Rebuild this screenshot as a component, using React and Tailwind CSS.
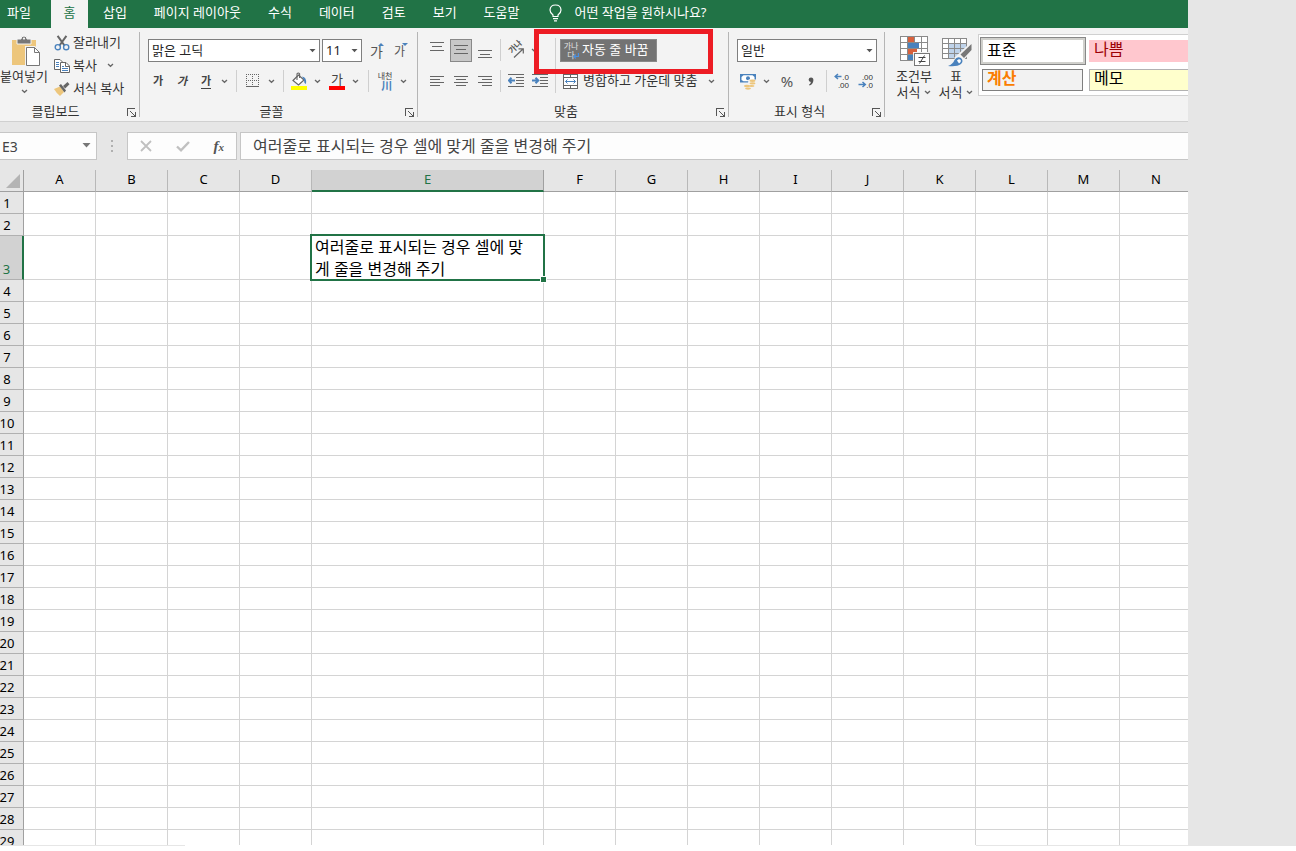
import React from "react";

const COLUMNS = ["A", "B", "C", "D", "E", "F", "G", "H", "I", "J", "K", "L", "M", "N"];
const ROWS = Array.from({ length: 29 }, (_, i) => i + 1);
const CELL_TEXT = "여러줄로 표시되는 경우 셀에 맞게 줄을 변경해 주기";

function Chevron() {
  return (
    <svg width="7" height="5" viewBox="0 0 7 5" fill="none" stroke="#666" strokeWidth="1.3" aria-hidden="true">
      <path d="M1 1 L3.5 3.3 L6 1" />
    </svg>
  );
}

function DropButton({ label }) {
  return (
    <button type="button" aria-label={label} className="flex h-6 w-[14px] shrink-0 items-center pl-[3px]">
      <Chevron />
    </button>
  );
}

function IconButton({ label, children }) {
  return (
    <button type="button" aria-label={label} className="flex h-6 w-6 shrink-0 items-center justify-center">
      {children}
    </button>
  );
}

function Sep({ className = "mx-1" }) {
  return <span className={`h-[22px] w-px shrink-0 bg-[#cfcfcf] ${className}`} />;
}

function Combo({ label, value, className }) {
  return (
    <span className={`relative flex h-[23px] shrink-0 ${className}`}>
      <select
        aria-label={label}
        defaultValue={value}
        className="h-full w-full appearance-none border border-[#7f7f7f] bg-white pb-[2px] pl-[3px] text-[13px] leading-5 text-[#262626]"
      >
        <option>{value}</option>
      </select>
      <svg className="pointer-events-none absolute top-[10px] right-1" width="7" height="4" viewBox="0 0 7 4" fill="#555" aria-hidden="true">
        <path d="M0.5 0 H6.5 L3.5 3.2 Z" />
      </svg>
    </span>
  );
}

function Group({ label, className, labelClass = "", children }) {
  return (
    <section aria-label={label} className={`flex shrink-0 flex-col ${className}`}>
      <div className="h-[75px]">{children}</div>
      <div className="flex h-[18px] items-center">
        <span className={`flex-1 text-center ${labelClass}`}>{label}</span>
        <button type="button" aria-label={`${label} 설정`} className="mr-px flex w-[13px] justify-center">
          <svg width="9" height="9" viewBox="0 0 9 9" fill="none" stroke="#555" shapeRendering="crispEdges" aria-hidden="true">
            <path d="M0.5 8 V0.5 H8" />
            <path d="M3 3 L8 8 M8.5 4 V8.5 H4" />
          </svg>
        </button>
      </div>
    </section>
  );
}

function GroupLine() {
  return <span className="mt-1 h-[85px] w-px shrink-0 bg-[#b5b5b5]" />;
}

function Lines({ d }) {
  return (
    <svg width="16" height="16" viewBox="0 0 16 16" fill="none" stroke="#666" shapeRendering="crispEdges" aria-hidden="true">
      <path d={d} />
    </svg>
  );
}

function PasteIcon() {
  return (
    <svg width="30" height="32" viewBox="0 0 30 32" aria-hidden="true">
      <path d="M1 5 H25 V30 H1 Z" fill="#edc67c" />
      <path d="M6 9 V4 H10 Q10 1 13 1 Q16 1 16 4 H20 V9 Z" fill="#777" stroke="#f3f3f3" strokeWidth="1" />
      <circle cx="13" cy="3.6" r="1.1" fill="#f3f3f3" />
      <path d="M14 11 H24 L30 17 V32 H14 Z" fill="#f3f3f3" />
      <path d="M15.5 12.5 H23.5 L28.5 17.5 V30.5 H15.5 Z" fill="#fff" stroke="#777" />
      <path d="M23.5 12.5 V17.5 H28.5" fill="none" stroke="#777" />
    </svg>
  );
}

function CutIcon() {
  return (
    <svg width="16" height="16" viewBox="0 0 16 16" fill="none" aria-hidden="true">
      <path d="M3.6 0.8 L10.5 10.5 M12.4 0.8 L5.5 10.5" stroke="#666" strokeWidth="2" />
      <circle cx="3.8" cy="12.2" r="2.6" stroke="#4a82bd" strokeWidth="1.4" />
      <circle cx="12.2" cy="12.2" r="2.6" stroke="#4a82bd" strokeWidth="1.4" />
    </svg>
  );
}

function CopyIcon() {
  return (
    <svg width="16" height="16" viewBox="0 0 16 16" fill="none" aria-hidden="true">
      <path d="M0.5 1.5 H6 L8.5 4 V11.5 H0.5 Z" fill="#fff" stroke="#666" />
      <path d="M2 4.5 H5 M2 6.5 H5 M2 8.5 H5" stroke="#4a82bd" />
      <path d="M6.5 4.5 H12 L15.5 8 V14.5 H6.5 Z" fill="#fff" stroke="#666" />
      <path d="M11.5 4.5 V8.5 H15.5" stroke="#666" />
      <path d="M8 8.5 H10 M8 10.5 H14 M8 12.5 H14" stroke="#4a82bd" />
    </svg>
  );
}

function PainterIcon() {
  return (
    <svg width="16" height="16" viewBox="0 0 16 16" aria-hidden="true">
      <path d="M0 8 L6 5.5 L10 11 L6 15 Q3 13 0 8 Z" fill="#edc67c" />
      <path d="M5 4.5 L7 3 L12 9.5 L10.5 11.5 Z" fill="#666" />
      <path d="M9 5 L13.5 1 L15.5 3.2 L11.2 7.6 Z" fill="#666" />
    </svg>
  );
}

function GrowIcon({ up }) {
  return (
    <span className="relative flex h-6 w-6 items-center pt-[2px] pl-[2px] text-[#555]">
      <span className={up ? "text-[14px] leading-5" : "text-[12px] leading-5"}>가</span>
      <svg className="absolute top-1 right-2" width="6" height="3" viewBox="0 0 6 3" fill="#4a82bd" aria-hidden="true">
        <path d={up ? "M0 3 L3 0 L6 3 Z" : "M0 0 H6 L3 3 Z"} />
      </svg>
    </span>
  );
}

function BordersIcon() {
  return (
    <svg width="14" height="14" viewBox="0 0 14 14" fill="none" stroke="#666" shapeRendering="crispEdges" aria-hidden="true">
      <path d="M0 0.5 H13 M0 6.5 H13 M0.5 0 V12 M6.5 0 V12 M12.5 0 V12" strokeDasharray="1 1" />
      <path d="M0 12.5 H13" />
    </svg>
  );
}

function FillIcon() {
  return (
    <svg width="16" height="18" viewBox="0 0 16 18" fill="none" aria-hidden="true">
      <path d="M2 8.5 L7.5 3 L13 8 L7.5 13 Z" fill="#fff" stroke="#666" strokeWidth="1.2" />
      <path d="M6 8 V1.8 Q7.3 0.2 8.6 1.8 V6" stroke="#666" strokeWidth="1.1" />
      <path d="M11 4.5 Q16 5 15 12 Q12.8 11 13 8 Z" fill="#4a82bd" />
      <path d="M0 14 H16 V18 H0 Z" fill="#ff0" />
    </svg>
  );
}

function OrientIcon() {
  return (
    <svg className="overflow-visible" width="18" height="18" viewBox="0 0 18 18" fill="none" aria-hidden="true">
      <text x="0" y="0" transform="translate(5 13) rotate(-45)" fontSize="8" fontWeight="bold" fill="#555">가나</text>
      <path d="M7 16.5 L16 8 M11.5 7.8 H16.3 V12.5" stroke="#666" strokeWidth="1.2" />
    </svg>
  );
}

function IndentIcon({ right }) {
  return (
    <svg width="16" height="14" viewBox="0 0 16 14" fill="none" aria-hidden="true">
      <path d="M0 0.5 H16 M8 3.5 H16 M8 6.5 H16 M8 9.5 H16 M0 12.5 H16" stroke="#666" shapeRendering="crispEdges" />
      <path d={right ? "M0 6.5 H5 M3.5 3.8 L6.3 6.5 L3.5 9.2" : "M7 6.5 H2 M3.5 3.8 L0.8 6.5 L3.5 9.2"} stroke="#4a82bd" strokeWidth="2" />
    </svg>
  );
}

function MergeIcon() {
  return (
    <svg width="15" height="15" viewBox="0 0 15 15" fill="none" aria-hidden="true">
      <path d="M0.5 0.5 H14.5 V14.5 H0.5 Z M0.5 3.5 H14.5 M0.5 11.5 H14.5 M7.5 0.5 V3.5 M7.5 11.5 V14.5" fill="#fff" stroke="#666" shapeRendering="crispEdges" />
      <path d="M2.5 7.5 H12.5 M4.5 5.5 L2.5 7.5 L4.5 9.5 M10.5 5.5 L12.5 7.5 L10.5 9.5" stroke="#4a82bd" />
    </svg>
  );
}

function CurrencyIcon() {
  return (
    <svg width="16" height="17" viewBox="0 0 16 17" fill="none" aria-hidden="true">
      <path d="M0 1 H16 V9.5 H0 Z" fill="#4a82bd" />
      <path d="M3.5 2.2 H12.5 L14.5 4 V7 L12.5 8.3 H3.5 L1.5 7 V4 Z" fill="#fff" />
      <circle cx="8" cy="5.2" r="2" fill="#4a82bd" />
      <path d="M8.5 6.5 H16 V16 H8 V10 Z" fill="#f3f3f3" />
      <ellipse cx="12.5" cy="7.8" rx="3" ry="1.3" fill="#edc67c" />
      <ellipse cx="12.5" cy="10.4" rx="3" ry="1.1" fill="#edc67c" />
      <ellipse cx="11.5" cy="13" rx="3" ry="1.1" fill="#edc67c" />
      <ellipse cx="6.8" cy="13" rx="2.8" ry="1.2" fill="#edc67c" />
      <ellipse cx="8" cy="15.6" rx="3" ry="1.1" fill="#edc67c" />
    </svg>
  );
}

function DecimalIcon({ increase }) {
  return (
    <svg className="overflow-visible font-['Liberation_Sans',sans-serif]" width="16" height="18" viewBox="0 0 16 18" fill="none" aria-hidden="true">
      <text x="15" y="8" textAnchor="end" fontSize="8" fill="#333">{increase ? ".0" : ".00"}</text>
      <text x="15" y="16" textAnchor="end" fontSize="8" fill="#333">{increase ? ".00" : ".0"}</text>
      <path d={increase ? "M7.5 4.5 H1.5 M4 2 L1.2 4.5 L4 7" : "M0.5 12.5 H6.5 M4.5 10 L7.3 12.5 L4.5 15"} stroke="#4a82bd" strokeWidth="1.5" />
    </svg>
  );
}

function ConditionalIcon() {
  return (
    <svg width="30" height="31" viewBox="0 0 30 31" fill="none" aria-hidden="true">
      <path d="M0.5 0.5 H27.5 V24.5 H0.5 Z" fill="#fff" />
      <path d="M0.5 0.5 H27.5 V24.5 H0.5 Z M0.5 6.5 H27.5 M0.5 12.5 H27.5 M0.5 18.5 H27.5 M7.5 0.5 V24.5 M14.5 0.5 V24.5 M21.5 0.5 V24.5" stroke="#8a8a8a" shapeRendering="crispEdges" />
      <path d="M8 1 H14 V6 H8 Z M8 13 H17 V18 H8 Z" fill="#d9613d" />
      <path d="M8 7 H19 V12 H8 Z M8 19 H14 V24 H8 Z" fill="#4a82bd" />
      <path d="M13 16 H30 V31 H13 Z" fill="#f3f3f3" />
      <path d="M14.5 17.5 H29.5 V29.5 H14.5 Z" fill="#fff" stroke="#777" shapeRendering="crispEdges" />
      <path d="M18.5 21.5 H25.5 M18.5 25.5 H25.5 M24.5 19.5 L19.5 27.5" stroke="#444" />
    </svg>
  );
}

function TableStyleIcon() {
  return (
    <svg width="30" height="31" viewBox="0 0 30 31" fill="none" aria-hidden="true">
      <path d="M0.5 2.5 H24.5 V22.5 H0.5 Z" fill="#fff" />
      <path d="M6 8 H25 V23 H6 Z" fill="#bfd3ea" />
      <path d="M0.5 2.5 H24.5 V22.5 H0.5 Z M0.5 7.5 H24.5 M0.5 12.5 H24.5 M0.5 17.5 H24.5 M6.5 2.5 V22.5 M12.5 2.5 V22.5 M18.5 2.5 V22.5" stroke="#8a8a8a" shapeRendering="crispEdges" />
      <path d="M30 6 V15 L19 27 L12 22 L26 9 Z" fill="#f3f3f3" />
      <path d="M29.5 8 V14 L22 22 L18.5 18.5 Z" fill="#777" />
      <path d="M6 30 Q11 28 12.5 24 Q15 20 19 22 Q22 25 19 28 Q15 31 6 30 Z" fill="#4a82bd" />
      <path d="M15 24.5 Q17 22.5 18.8 24 Q19.5 26 17 27.5 Z" fill="#fff" />
    </svg>
  );
}

function TabBar() {
  const tabs = ["삽입", "페이지 레이아웃", "수식", "데이터", "검토", "보기", "도움말"];
  return (
    <nav className="flex h-7 shrink-0 overflow-hidden bg-[#217346] text-[13px] leading-6 whitespace-nowrap text-white">
      <button type="button" className="flex pr-5 pl-[7px]">파일</button>
      <button type="button" aria-current="page" className="flex w-[37px] justify-center bg-[#f3f3f3] text-[#217346]">홈</button>
      <div className="ml-[15px] flex gap-[27px]">
        {tabs.map((t) => (
          <button type="button" key={t} className="flex">{t}</button>
        ))}
      </div>
      <button type="button" className="ml-[29px] flex gap-[13px]">
        <svg className="mt-1" width="13" height="18" viewBox="0 0 13 18" fill="none" stroke="#fff" strokeWidth="1.2" aria-hidden="true">
          <path d="M4 12.5 V11 Q1 8.8 1 6 Q1.2 1 6.5 1 Q11.8 1 12 6 Q12 8.8 9 11 V12.5 Z" />
          <path d="M4 14.6 H9 M5 16.8 H8" />
        </svg>
        <span>어떤 작업을 원하시나요?</span>
      </button>
    </nav>
  );
}

function ClipboardGroup() {
  return (
    <Group label="클립보드" className="w-[139px]" labelClass="pr-[14px]">
      <div className="flex pt-[3px]">
        <button type="button" className="flex w-12 flex-col items-center pt-1">
          <span className="pl-1"><PasteIcon /></span>
          <span className="leading-[18px]">붙여넣기</span>
          <span className="mt-1"><Chevron /></span>
        </button>
        <div className="ml-[6px] flex flex-col">
          <button type="button" className="flex h-[23px] items-center gap-[3px]"><CutIcon />잘라내기</button>
          <div className="flex h-[23px] items-center">
            <button type="button" className="flex items-center gap-[3px]"><CopyIcon />복사</button>
            <span className="ml-[7px]"><DropButton label="복사 옵션" /></span>
          </div>
          <button type="button" className="flex h-[23px] items-center gap-[3px]"><PainterIcon />서식 복사</button>
        </div>
      </div>
    </Group>
  );
}

function FontGroup() {
  return (
    <Group label="글꼴" className="w-[277px]">
      <div className="flex pt-[11px] pl-2">
        <Combo label="글꼴 이름" value="맑은 고딕" className="w-[172px]" />
        <Combo label="글꼴 크기" value="11" className="ml-[2px] w-10" />
        <button type="button" aria-label="글꼴 크기 크게" className="ml-[6px] h-[23px]"><GrowIcon up /></button>
        <button type="button" aria-label="글꼴 크기 작게" className="h-[23px]"><GrowIcon /></button>
      </div>
      <div className="mt-[7px] flex h-6 items-center pl-[6px] text-[11px] text-[#444]">
        <IconButton label="굵게"><b>가</b></IconButton>
        <IconButton label="기울임꼴"><b className="italic">가</b></IconButton>
        <IconButton label="밑줄"><b className="border-b border-[#444] leading-[14px]">가</b></IconButton>
        <DropButton label="밑줄 옵션" />
        <Sep />
        <IconButton label="테두리"><BordersIcon /></IconButton>
        <DropButton label="테두리 옵션" />
        <Sep className="mr-[3px] ml-1" />
        <IconButton label="채우기 색"><FillIcon /></IconButton>
        <DropButton label="채우기 색 옵션" />
        <IconButton label="글꼴 색">
          <span className="w-4 border-b-4 border-[#f00] text-[13px] leading-[14px]">가</span>
        </IconButton>
        <DropButton label="글꼴 색 옵션" />
        <Sep className="mr-1 ml-[5px]" />
        <IconButton label="윗주">
          <span className="flex flex-col items-end text-[8px] leading-[9px]">
            <span className="whitespace-nowrap">내천</span>
            <b className="text-[11px] leading-[11px] text-[#4a82bd]">川</b>
          </span>
        </IconButton>
        <DropButton label="윗주 옵션" />
      </div>
    </Group>
  );
}

function AlignGroup() {
  return (
    <Group label="맞춤" className="w-[310px]">
      <div className="flex pt-[10px] pl-[7px]">
        <div className="flex flex-col gap-[7px]">
          <div className="flex h-6 items-center">
            <IconButton label="위쪽 맞춤"><Lines d="M1 0.5 H15 M3 4.5 H13 M1 8.5 H15" /></IconButton>
            <button type="button" aria-label="가운데 맞춤" aria-pressed="true" className="mx-px flex h-[23px] w-[22px] items-center justify-center border border-[#888] bg-[#c8c8c8]">
              <Lines d="M1 3.5 H15 M3 7.5 H13 M1 11.5 H15" />
            </button>
            <IconButton label="아래쪽 맞춤"><Lines d="M1 8.5 H15 M3 12.5 H13 M1 15.5 H15" /></IconButton>
            <Sep className="mx-[3px]" />
            <IconButton label="방향"><OrientIcon /></IconButton>
            <DropButton label="방향 옵션" />
          </div>
          <div className="flex h-6 items-center">
            <IconButton label="왼쪽 맞춤"><Lines d="M1 3.5 H15 M1 6.5 H11 M1 9.5 H15 M1 12.5 H11" /></IconButton>
            <IconButton label="가로 가운데 맞춤"><Lines d="M1 3.5 H15 M3 6.5 H13 M1 9.5 H15 M3 12.5 H13" /></IconButton>
            <IconButton label="오른쪽 맞춤"><Lines d="M1 3.5 H15 M5 6.5 H15 M1 9.5 H15 M5 12.5 H15" /></IconButton>
            <Sep className="mx-[3px]" />
            <IconButton label="내어쓰기"><IndentIcon /></IconButton>
            <IconButton label="들여쓰기"><IndentIcon right /></IconButton>
          </div>
        </div>
        <span className="ml-[3px] h-[55px] w-px bg-[#cfcfcf]" />
        <div className="ml-1 flex flex-col gap-[7px]">
          <div className="relative flex h-6 items-center">
            <button type="button" className="flex h-[23px] w-[97px] items-center gap-[3px] border border-[#8a8a8a] bg-[#737373] pl-[2px] whitespace-nowrap text-white">
              <span className="relative flex w-4 flex-col text-[8px] leading-[9px] text-[#e4e4e4]">
                <span>가나</span>
                <span>다</span>
                <svg className="absolute right-0 bottom-0" width="6" height="6" viewBox="0 0 6 6" fill="none" stroke="#4a90e0" strokeWidth="1.2" aria-hidden="true">
                  <path d="M5.4 0 V3.5 H1 M2.8 1.5 L0.8 3.5 L2.8 5.5" />
                </svg>
              </span>
              자동 줄 바꿈
            </button>
            <div className="pointer-events-none absolute top-[-9px] left-[-26px] h-[45px] w-[179px] border-[5px] border-[#ed1c24]" />
          </div>
          <div className="flex h-6 items-center pl-[3px]">
            <button type="button" className="flex items-center gap-[5px] whitespace-nowrap"><MergeIcon />병합하고 가운데 맞춤</button>
            <span className="ml-2"><DropButton label="병합 옵션" /></span>
          </div>
        </div>
      </div>
    </Group>
  );
}

function NumberGroup() {
  return (
    <Group label="표시 형식" className="w-[155px]">
      <div className="flex pt-[11px] pl-2">
        <Combo label="표시 형식 선택" value="일반" className="w-[140px]" />
      </div>
      <div className="mt-[7px] flex h-6 items-center pl-[7px]">
        <IconButton label="회계 표시 형식"><CurrencyIcon /></IconButton>
        <DropButton label="회계 옵션" />
        <button type="button" className="ml-px w-6 text-center text-[15px] leading-6 text-[#555]">%</button>
        <button type="button" aria-label="쉼표 스타일" className="flex h-6 w-6 items-center justify-center">
          <svg width="6" height="9" viewBox="0 0 6 9" aria-hidden="true">
            <path d="M3 0.5 Q5.5 0.6 5.4 3.2 Q5.2 6.8 1.6 8.6 L1 7.8 Q2.8 6.6 2.9 5 Q0.6 4.9 0.6 2.8 Q0.8 0.6 3 0.5 Z" fill="#555" />
          </svg>
        </button>
        <Sep className="mx-[3px]" />
        <IconButton label="자릿수 늘림"><DecimalIcon increase /></IconButton>
        <IconButton label="자릿수 줄임"><DecimalIcon /></IconButton>
      </div>
    </Group>
  );
}

function StylesGroup() {
  return (
    <section aria-label="스타일" className="flex min-w-0 flex-1 pt-[6px] pl-2">
      <button type="button" className="flex w-[42px] shrink-0 flex-col items-center pt-[2px] leading-4">
        <span className="pl-[2px]"><ConditionalIcon /></span>
        <span className="mt-px">조건부</span>
        <span className="flex items-center gap-1">서식<Chevron /></span>
      </button>
      <button type="button" className="flex w-[42px] shrink-0 flex-col items-center pt-[2px] leading-4">
        <span className="pl-[2px]"><TableStyleIcon /></span>
        <span className="mt-px">표</span>
        <span className="flex items-center gap-1">서식<Chevron /></span>
      </button>
      <div className="ml-px grid h-[62px] min-w-0 flex-1 grid-cols-[106px_1fr] gap-x-[3px] border border-r-0 border-[#d0d0d0] bg-white py-[2px] pl-px text-[16px]">
        <button type="button" className="h-7 border border-[#888] bg-[#d0d0cc] p-[2px] text-left text-black">
          <span className="block h-full bg-white pl-1 leading-5">표준</span>
        </button>
        <button type="button" className="mt-[3px] flex h-[22px] bg-[#ffc7ce] pl-[5px] leading-[18px] text-[#9c0006]">나쁨</button>
        <button type="button" className="mt-[2px] mr-[3px] ml-[2px] flex h-[22px] border border-[#7f7f7f] bg-[#f2f2f2] pl-1 leading-4 font-bold text-[#fa7d00]">계산</button>
        <button type="button" className="mt-[2px] flex h-[22px] border border-r-0 border-[#b2b2b2] bg-[#ffffcc] pl-1 leading-4 text-black">메모</button>
      </div>
    </section>
  );
}

function FormulaBar() {
  return (
    <div className="flex h-12 shrink-0 items-start bg-[#e6e6e6] pt-[10px]">
      <div className="relative flex h-7 w-[97px] shrink-0">
        <input aria-label="이름 상자" defaultValue="E3" className="h-full w-full border border-l-0 border-[#c6c6c6] bg-[#fdfdfd] pl-[2px] text-[14px] text-[#444]" />
        <svg className="pointer-events-none absolute top-[11px] right-[6px]" width="9" height="5" viewBox="0 0 9 5" fill="#777" aria-hidden="true">
          <path d="M0.5 0 H8.5 L4.5 4.5 Z" />
        </svg>
      </div>
      <div className="mx-[14px] flex h-7 w-[2px] shrink-0 flex-col items-center justify-center gap-[3px]">
        <span className="h-[2px] w-[2px] bg-[#b0b0b0]" />
        <span className="h-[2px] w-[2px] bg-[#b0b0b0]" />
        <span className="h-[2px] w-[2px] bg-[#b0b0b0]" />
      </div>
      <div className="flex h-7 w-[110px] shrink-0 items-center justify-around border border-[#c6c6c6] bg-[#fdfdfd]">
        <button type="button" aria-label="취소">
          <svg width="12" height="12" viewBox="0 0 12 12" fill="none" stroke="#c0c0c0" strokeWidth="1.8" aria-hidden="true">
            <path d="M1 1 L11 11 M11 1 L1 11" />
          </svg>
        </button>
        <button type="button" aria-label="입력">
          <svg width="14" height="11" viewBox="0 0 14 11" fill="none" stroke="#c0c0c0" strokeWidth="2.4" aria-hidden="true">
            <path d="M1 5.5 L5 9.3 L13 1" />
          </svg>
        </button>
        <button type="button" aria-label="함수 삽입" className="font-['Liberation_Serif',serif] text-[15px] leading-5 font-bold text-[#555] italic">
          f<span className="text-[11px]">x</span>
        </button>
      </div>
      <input aria-label="수식 입력줄" defaultValue={CELL_TEXT} className="ml-[3px] h-7 min-w-0 flex-1 border border-r-0 border-[#c6c6c6] bg-[#fdfdfd] pb-[3px] pl-3 text-[16px] text-[#444]" />
    </div>
  );
}

function Sheet() {
  return (
    <div className="min-h-0 flex-1 overflow-hidden bg-white">
      <table className="w-full table-fixed border-separate border-spacing-0 text-[13px] leading-4 text-black">
        <colgroup>
          <col className="w-6" />
          {COLUMNS.map((c) => (
            <col key={c} className={c === "E" ? "w-[232px]" : c === "N" ? "" : "w-[72px]"} />
          ))}
        </colgroup>
        <thead>
          <tr className="h-[22px] bg-[#e6e6e6]">
            <th aria-label="모두 선택" className="border-r border-b border-[#a0a0a0] p-0">
              <svg className="ml-[6px]" width="14" height="14" viewBox="0 0 14 14" fill="#b4b4b4" aria-hidden="true">
                <path d="M14 0 V14 H0 Z" />
              </svg>
            </th>
            {COLUMNS.map((c) => (
              <th
                key={c}
                scope="col"
                className={
                  c === "E"
                    ? "h-[22px] border-r border-b-2 border-r-[#a0a0a0] border-b-[#217346] bg-[#d2d2d2] p-0 pb-[3px] font-normal text-[#217346]"
                    : c === "N"
                      ? "h-[22px] border-b border-[#a0a0a0] p-0 pb-1 pl-1 font-normal"
                      : "h-[22px] border-r border-b border-r-[#b8b8b8] border-b-[#a0a0a0] p-0 pb-1 font-normal"
                }
              >
                {c}
              </th>
            ))}
          </tr>
        </thead>
        <tbody>
          {ROWS.map((r) => (
            <tr key={r} className={r === 3 ? "h-11" : "h-[22px]"}>
              <th
                scope="row"
                className={
                  r === 3
                    ? "h-11 border-r-2 border-b border-r-[#217346] border-b-[#b0b0b0] bg-[#d2d2d2] p-0 pr-[9px] pb-[2px] align-bottom font-normal text-[#217346]"
                    : "h-[22px] border-r border-b border-r-[#a0a0a0] border-b-[#b0b0b0] bg-[#e6e6e6] p-0 pr-[9px] pb-[2px] align-bottom font-normal"
                }
              >
                <span className="flex justify-center">{r}</span>
              </th>
              {COLUMNS.map((c) =>
                r === 3 && c === "E" ? (
                  <td key={c} className="relative border-r border-b border-[#d4d4d4] p-0 pr-2 pb-[2px] pl-[3px] text-[16px]">
                    <div className="h-[41px] leading-[22px]">{CELL_TEXT}</div>
                    <div className="pointer-events-none absolute -inset-[2px] border-2 border-[#217346]" />
                    <div className="absolute -right-1 -bottom-1 h-[7px] w-[7px] border border-white bg-[#217346]" />
                  </td>
                ) : (
                  <td key={c} className={c === "N" ? "border-b border-[#d4d4d4] p-0" : "border-r border-b border-[#d4d4d4] p-0"} />
                )
              )}
            </tr>
          ))}
        </tbody>
      </table>
    </div>
  );
}

export default function App() {
  return (
    <div className="h-screen overflow-hidden bg-white pb-[5px] font-['Noto_Sans','Noto_Sans_CJK_KR',sans-serif]">
      <div className="flex h-full">
        <main className="flex min-w-0 flex-1 flex-col overflow-hidden">
          <TabBar />
          <div className="flex h-[94px] shrink-0 overflow-hidden border-b border-[#d0d0d0] bg-[#f3f3f3] text-[13px] whitespace-nowrap text-[#333]">
            <ClipboardGroup />
            <GroupLine />
            <FontGroup />
            <GroupLine />
            <AlignGroup />
            <GroupLine />
            <NumberGroup />
            <GroupLine />
            <StylesGroup />
          </div>
          <FormulaBar />
          <Sheet />
          <div className="flex h-px shrink-0 justify-between">
            <span className="w-[185px] bg-[#e6e6e6]" />
            <span className="w-[212px] bg-[#e6e6e6]" />
          </div>
        </main>
        <aside className="w-[108px] shrink-0 bg-[#e6e6e6]" />
      </div>
    </div>
  );
}
